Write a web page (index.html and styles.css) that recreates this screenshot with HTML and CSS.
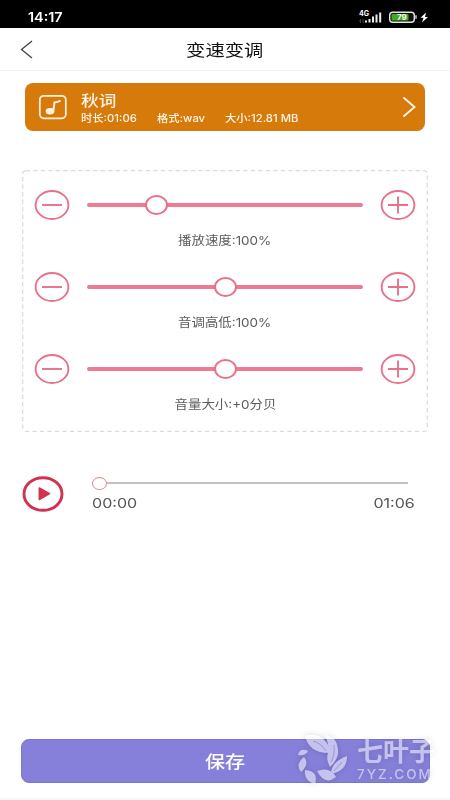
FILE: index.html
```html
<!DOCTYPE html>
<html lang="zh-CN">
<head>
<meta charset="utf-8">
<title>变速变调</title>
<link rel="stylesheet" href="styles.css">
</head>
<body>
<div class="screen">
  <div class="status">
    <span class="wide clock">14:17</span>
    <svg class="status-icons" width="72" height="18" viewBox="0 0 72 18">
      <text x="1" y="7.500" class="net">4G</text>
      <path d="M1 13h2M2.5 11v4M5 11v4" stroke="#444" stroke-width="1"/>
      <path d="M8 14.500v-2M11.5 14.500v-3.500M15 14.500v-6M18.5 14.500v-8M22.2 14.500v-10" stroke="#eee" stroke-width="2"/>
      <rect x="31.7" y="4.200" width="24.6" height="10" rx="3" fill="#111" stroke="#e4e4e4" stroke-width="1.4"/>
      <rect x="33.5" y="5.900" width="17" height="6.600" rx="1" fill="#43a91f"/>
      <rect x="57.3" y="7.300" width="1.4" height="3.4" fill="#ddd"/>
      <text x="39" y="12.300" class="level">79</text>
      <path d="M68 4.500l-5.5 5.2h3L64 14.500l6-5.6h-3z" fill="#fff"/>
    </svg>
  </div>
  <header class="header">
    <svg class="back" width="14" height="20" viewBox="0 0 14 20"><path d="M12 2L1.500 10.400L12 19" fill="none" stroke="#444" stroke-width="1.3"/></svg>
    <h1 class="wide title">变速变调</h1>
  </header>
  <section class="card">
    <svg class="note" width="30" height="26" viewBox="0 0 30 26">
      <rect x="1.800" y="1.800" width="26" height="22.500" rx="4" fill="none" stroke="#fff2dc" stroke-width="1.700"/>
      <ellipse cx="12" cy="17.200" rx="4.300" ry="3.300" fill="#fff2dc"/>
      <path d="M15.200 17.500L16.500 8.500Q20 8.300 22.500 6.500" fill="none" stroke="#fff2dc" stroke-width="2"/>
    </svg>
    <div class="info">
      <div class="wide song">秋词</div>
      <div class="meta"><span class="wide">时长:01:06</span><span class="wide">格式:wav</span><span class="wide">大小:12.81 MB</span></div>
    </div>
    <svg class="go" width="15" height="22" viewBox="0 0 15 22"><path d="M2.500 1.500L13.500 11L2.500 20.500" fill="none" stroke="#fff5e6" stroke-width="1.900"/></svg>
  </section>
  <section class="panel">
    <svg class="frame" width="406" height="262"><rect x=".7" y=".7" width="404.600" height="260.600" rx="3" fill="none" stroke="#dcdcdc" stroke-width="1.300" stroke-dasharray="4.300 3.200"/></svg>
    <div class="control">
      <div class="row">
        <svg class="round" viewBox="0 0 36 30"><ellipse cx="18" cy="15" rx="16.400" ry="14"/><path d="M8 15h20"/></svg>
        <div class="track"><i class="knob quarter"></i></div>
        <svg class="round" viewBox="0 0 36 30"><ellipse cx="18" cy="15" rx="16.400" ry="14"/><path d="M8 15h20M18 6.500v17"/></svg>
      </div>
      <div class="label"><span class="wide">播放速度:100%</span></div>
    </div>
    <div class="control">
      <div class="row">
        <svg class="round" viewBox="0 0 36 30"><ellipse cx="18" cy="15" rx="16.400" ry="14"/><path d="M8 15h20"/></svg>
        <div class="track"><i class="knob"></i></div>
        <svg class="round" viewBox="0 0 36 30"><ellipse cx="18" cy="15" rx="16.400" ry="14"/><path d="M8 15h20M18 6.500v17"/></svg>
      </div>
      <div class="label"><span class="wide">音调高低:100%</span></div>
    </div>
    <div class="control">
      <div class="row">
        <svg class="round" viewBox="0 0 36 30"><ellipse cx="18" cy="15" rx="16.400" ry="14"/><path d="M8 15h20"/></svg>
        <div class="track"><i class="knob"></i></div>
        <svg class="round" viewBox="0 0 36 30"><ellipse cx="18" cy="15" rx="16.400" ry="14"/><path d="M8 15h20M18 6.500v17"/></svg>
      </div>
      <div class="label"><span class="wide">音量大小:+0分贝</span></div>
    </div>
  </section>
  <section class="player">
    <svg class="play" width="42" height="36" viewBox="0 0 42 36"><ellipse cx="21" cy="18" rx="19" ry="16.300" fill="none" stroke="#d0324f" stroke-width="2.900"/><path d="M17.300 12L27.500 17.700L17.300 23.500z" fill="#d0324f" stroke="#d0324f" stroke-width="1.500" stroke-linejoin="round"/></svg>
    <div class="seek">
      <div class="bar"><i class="dot"></i></div>
      <div class="times"><span class="wide">00:00</span><span class="wide end">01:06</span></div>
    </div>
  </section>
  <button class="save"><span class="wide">保存</span></button>
  <div class="bottom"></div>
  <div class="mark">
    <svg width="52" height="52" viewBox="0 0 52 52">
      <g fill="#fff">
        <path d="M8 3Q21-1 29 9Q34 15 32 20Q12 20 8 3z"/>
        <path d="M28 2Q42 4 41 21Q39 29 33 34Q28 25 32 18Q31 8 28 2z"/>
        <path d="M50 23Q50 38 34 41Q34 29 50 23z"/>
        <path d="M20 38Q33 33 39 44Q28 53 20 38z"/>
        <path d="M8 37Q22 38 18 51Q7 48 8 37z"/>
        <path d="M7 24Q13 31 4 39Q-2 31 7 24z"/>
        <path d="M1 22Q3 14 11 18Q9 23 1 22z"/>
      </g>
      <path d="M16 8Q24 10 29 18M37 12Q38 22 34 29M45 29L37 38" fill="none" stroke="#8780da" stroke-width=".7"/>
    </svg>
    <div class="mark-text"><div class="brand">七叶子</div><div class="site">7YZ.COM</div></div>
  </div>
</div>
</body>
</html>
```

FILE: styles.css
```css
* { box-sizing: border-box; }
body { margin: 0; background: #fff; font-family: Inter, "Noto Sans CJK SC", sans-serif; }
.screen { position: relative; width: 450px; height: 800px; overflow: hidden; display: flex; flex-direction: column; }
.wide { display: inline-block; white-space: nowrap; transform: scaleX(1.18); transform-origin: left center; }
.status { height: 28px; flex: none; background: #000; color: #fff; display: flex; align-items: flex-start; justify-content: space-between; padding: 8px 20px 0 28px; }
.clock { font-size: 12.500px; font-weight: 600; line-height: 19px; }
.clock.wide { transform: scaleX(1.15); }
.net { font: 700 7px Inter, sans-serif; fill: #fff; }
.level { font: 700 8px Inter, sans-serif; fill: #fff; }
.header { height: 43px; flex: none; display: grid; grid-template-columns: 50px 1fr 50px; align-items: center; border-bottom: 1px solid #f3f3f3; }
.back { margin-left: 20px; }
.title { margin: 1px 0 0; justify-self: center; font-size: 16.400px; line-height: 24px; font-weight: 400; color: #111; transform-origin: center; }
.card { height: 48px; flex: none; margin: 12px 25px 0; padding: 0 9px 0 13px; border-radius: 8px; background: #d67b0b; color: #fff5e6; display: flex; align-items: center; }
.info { flex: 1; margin: 2px 0 0 13px; }
.song { display: block; font-size: 15px; font-weight: 500; line-height: 20px; }
.meta { display: flex; font-size: 10px; line-height: 14px; font-weight: 500; }
.meta .wide { transform: scaleX(1.13); }
.meta span:nth-child(1) { width: 76px; }
.meta span:nth-child(2) { width: 68px; }
.panel { position: relative; height: 262px; flex: none; margin: 39px 22px 0; padding: 19px 12px 0; }
.frame { position: absolute; left: 0; top: 0; }
.control { height: 82px; }
.row { display: flex; align-items: center; justify-content: space-between; height: 32px; }
.round { width: 36px; height: 30px; fill: none; stroke: #e7718b; stroke-width: 1.9; }
.track { width: 276px; height: 4px; border-radius: 2px; background: #ec7b93; display: flex; align-items: center; justify-content: center; }
.knob { width: 23px; height: 20px; flex: none; border: 2px solid #e7718b; border-radius: 50%; background: #fff; }
.quarter { margin-right: 138px; }
.label { display: flex; justify-content: center; margin-top: 10px; font-size: 12px; line-height: 20px; color: #5c5c5c; }
.label .wide { transform: scaleX(1.12); transform-origin: center; }
.player { margin: 43px 35px 0 22px; flex: none; display: flex; align-items: flex-start; }
.play { margin-top: 1px; }
.seek { flex: 1; margin-left: 28px; }
.bar { height: 2px; margin: 7px 7px 0 0; background: #c2c2c2; display: flex; align-items: center; }
.dot { width: 15px; height: 13px; flex: none; border: 1px solid #e08a8d; border-radius: 50%; background: #fff; }
.times { display: flex; justify-content: space-between; margin-top: 8px; font-size: 13.500px; line-height: 22px; color: #555; }
.times .wide { transform: scaleX(1.19); }
.times .end { transform-origin: right center; }
.save { width: 409px; height: 44px; margin: auto 0 0 21px; flex: none; padding: 0; border: 1px solid #7b75d3; border-radius: 8px; background: #8680da; color: #fff; font-family: inherit; font-size: 17px; font-weight: 500; }
.save .wide { transform-origin: center; position: relative; left: -1px; top: -1px; }
.bottom { height: 17px; flex: none; border-bottom: 2px solid #f6f6f6; }
.mark { position: absolute; left: 297px; top: 733px; display: flex; opacity: .52; color: #fff; filter: drop-shadow(0 0 3px rgba(0,0,0,.3)); }
.mark-text { margin: 4px 0 0 8px; white-space: nowrap; }
.brand { font-size: 26px; line-height: 30px; font-weight: 700; }
.site { font-size: 13.500px; line-height: 14px; letter-spacing: 2px; font-weight: 500; }
```
